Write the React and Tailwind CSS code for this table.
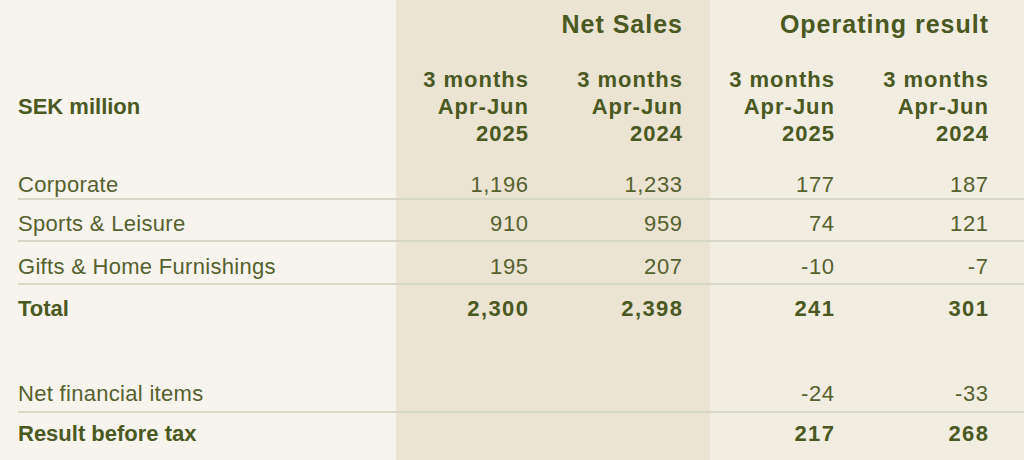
const cols = 'grid grid-cols-[378px_132px_154px_152px_154px_36px]';

const rows = [
    { label: 'Corporate', values: ['1,196', '1,233', '177', '187'], h: 'h-[40px] pb-[1px] border-b-2' },
    { label: 'Sports & Leisure', values: ['910', '959', '74', '121'], h: 'h-[42px] pb-[4px] border-b-2' },
    { label: 'Gifts & Home Furnishings', values: ['195', '207', '-10', '-7'], h: 'h-[43px] pb-[4px] border-b-2' },
];

const Row = ({ label, values, className, bold }) => (
    <div className={`${cols} ml-[18px] items-end border-[#d7d8c6] ${className}`}>
        <div className={bold ? 'font-bold text-[#4a5822]' : 'text-[#55612e] tracking-[0.3px]'}>{label}</div>
        {values.map((v, i) => (
            <div
                key={i}
                className={`text-right ${bold ? 'font-bold text-[#4a5822] tracking-[1.4px] -mr-[1.4px]' : 'text-[#55612e] tracking-[0.6px] -mr-[0.6px]'}`}
            >
                {v}
            </div>
        ))}
        <div />
    </div>
);

const PeriodHead = ({ year }) => (
    <div className="text-right font-bold tracking-[1px] -mr-[1px] leading-[27px]">
        <div>3 months</div>
        <div>Apr-Jun</div>
        <div>{year}</div>
    </div>
);

export default function App() {
    return (
        <div className="w-[1024px] h-[460px] overflow-hidden bg-[linear-gradient(to_right,#f7f4ed_396px,#ebe4d3_396px,#ebe4d3_710px,#f1ede1_710px)] font-['Liberation_Sans',Arial,sans-serif] text-[22px] leading-[24px] text-[#4a5822]">
            {/* column group titles */}
            <div className={`${cols} ml-[18px] h-[48px] items-center`}>
                <div />
                <div className="col-span-2 text-right text-[25px] font-bold tracking-[1px] -mr-[1px]">Net Sales</div>
                <div className="col-span-2 text-right text-[25px] font-bold tracking-[1px] -mr-[1px]">Operating result</div>
                <div />
            </div>

            {/* period headers */}
            <div className={`${cols} ml-[18px] h-[112px] pt-[18px] items-start`}>
                <div className="flex h-[81px] items-center font-bold">SEK million</div>
                <PeriodHead year="2025" />
                <PeriodHead year="2024" />
                <PeriodHead year="2025" />
                <PeriodHead year="2024" />
                <div />
            </div>

            {rows.map((r) => (
                <Row key={r.label} label={r.label} values={r.values} className={r.h} />
            ))}
            <Row label="Total" values={['2,300', '2,398', '241', '301']} className="h-[40px] pb-[4px]" bold />

            <div className="h-[40px]" />

            <Row label="Net financial items" values={['', '', '-24', '-33']} className="h-[48px] pb-[5px] border-b-2" />
            <div className={`${cols} ml-[18px] h-[47px] pt-[9px] items-start font-bold`}>
                <div>Result before tax</div>
                <div />
                <div />
                <div className="text-right tracking-[1.4px] -mr-[1.4px]">217</div>
                <div className="text-right tracking-[1.4px] -mr-[1.4px]">268</div>
                <div />
            </div>
        </div>
    );
}
